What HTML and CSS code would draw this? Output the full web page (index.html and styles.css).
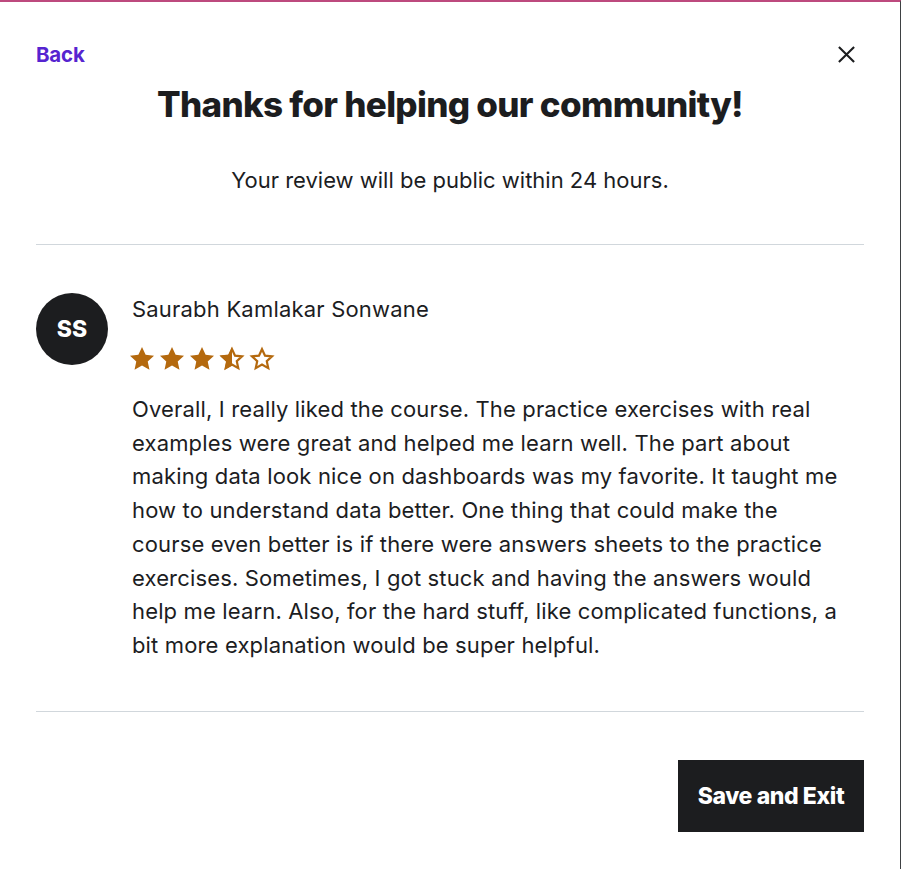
FILE: index.html
```html
<!DOCTYPE html>
<html lang="en">
<head>
<meta charset="utf-8">
<title>Review submitted</title>
<link rel="stylesheet" href="styles.css">
</head>
<body>
<div class="modal">
  <div class="topbar">
    <a class="back" href="#">Back</a>
    <button class="close" aria-label="Close">
      <svg width="20" height="20" viewBox="0 0 20 20"><path d="M2 2 L18 18 M18 2 L2 18" stroke="#1c1d1f" stroke-width="2.2" fill="none"/></svg>
    </button>
  </div>
  <h1 class="title">Thanks for helping our community!</h1>
  <p class="subtitle">Your review will be public within 24 hours.</p>
  <hr class="divider">
  <div class="review">
    <div class="avatar">SS</div>
    <div class="review-body">
      <div class="name">Saurabh Kamlakar Sonwane</div>
      <div class="stars">
        <svg width="28" height="28" viewBox="0 0 24 24"><path d="M12 1.8l3.1 6.6 7.2.8-5.4 4.9 1.5 7.1L12 17.6l-6.4 3.6 1.5-7.1L1.7 9.2l7.2-.8z" fill="#b4690e"/></svg>
        <svg width="28" height="28" viewBox="0 0 24 24"><path d="M12 1.8l3.1 6.6 7.2.8-5.4 4.9 1.5 7.1L12 17.6l-6.4 3.6 1.5-7.1L1.7 9.2l7.2-.8z" fill="#b4690e"/></svg>
        <svg width="28" height="28" viewBox="0 0 24 24"><path d="M12 1.8l3.1 6.6 7.2.8-5.4 4.9 1.5 7.1L12 17.6l-6.4 3.6 1.5-7.1L1.7 9.2l7.2-.8z" fill="#b4690e"/></svg>
        <svg width="28" height="28" viewBox="0 0 24 24"><path d="M12 3.6l2.6 5.5 6 .7-4.5 4.1 1.25 5.9L12 16.8l-5.35 3 1.25-5.9-4.5-4.1 6-.7z" fill="none" stroke="#b4690e" stroke-width="1.9"/><path d="M12 1.8 L12 17.6 L5.6 21.2 L7.1 14.1 L1.7 9.2 L8.9 8.4 Z" fill="#b4690e"/></svg>
        <svg width="28" height="28" viewBox="0 0 24 24"><path d="M12 3.6l2.6 5.5 6 .7-4.5 4.1 1.25 5.9L12 16.8l-5.35 3 1.25-5.9-4.5-4.1 6-.7z" fill="none" stroke="#b4690e" stroke-width="1.9"/></svg>
      </div>
      <p class="text">Overall, I really liked the course. The practice exercises with real examples were great and helped me learn well. The part about making data look nice on dashboards was my favorite. It taught me how to understand data better. One thing that could make the course even better is if there were answers sheets to the practice exercises. Sometimes, I got stuck and having the answers would help me learn. Also, for the hard stuff, like complicated functions, a bit more explanation would be super helpful.</p>
    </div>
  </div>
  <hr class="divider divider-bottom">
  <div class="footer">
    <button class="save">Save and Exit</button>
  </div>
</div>
</body>
</html>
```
FILE: styles.css
```css
* { box-sizing: border-box; }
html, body { margin: 0; padding: 0; background: #fff; }
body { font-family: Inter, "Noto Sans", sans-serif; color: #1c1d1f; }
.modal {
  width: 901px;
  height: 869px;
  border-top: 2px solid #bd4a7e;
  border-right: 1px solid #3e4143;
  padding: 0 36px 0 36px;
  display: flex;
  flex-direction: column;
}
.topbar {
  display: flex;
  justify-content: space-between;
  align-items: center;
  margin-top: 38px;
  height: 28px;
}
.back {
  color: #5624d0;
  font-weight: 700;
  font-size: 20.5px;
  text-decoration: none;
  letter-spacing: -0.2px;
}
.close {
  background: none;
  border: 0;
  padding: 0;
  width: 36px;
  height: 36px;
  display: flex;
  align-items: center;
  justify-content: center;
}
.close svg { width: 19px; height: 19px; }
.title {
  margin: 14px 0 0;
  text-align: center;
  font-size: 35px;
  font-weight: 800;
  letter-spacing: -0.7px;
  line-height: 44px;
}
.subtitle {
  margin: 38px 0 0;
  text-align: center;
  font-size: 22px;
  line-height: 32px;
  color: #1c1d1f;
}
.divider {
  border: 0;
  border-top: 1px solid #d1d7dc;
  margin: 48px 0 0;
  width: 100%;
}
.review {
  display: flex;
  gap: 24px;
  padding-top: 48px;
}
.avatar {
  flex: none;
  width: 72px;
  height: 72px;
  border-radius: 50%;
  background: #1c1d1f;
  color: #fff;
  font-weight: 800;
  font-size: 23px;
  display: flex;
  align-items: center;
  justify-content: center;
}
.review-body { flex: 1; }
.name {
  font-size: 22px;
  line-height: 32px;
  letter-spacing: 0.2px;
}
.stars {
  display: flex;
  gap: 2px;
  margin: 20px 0 0 -4px;
}
.text {
  margin: 20px 0 0;
  padding-right: 14px;
  font-size: 22px;
  line-height: 33.7px;
  letter-spacing: 0.15px;
  color: #1c1d1f;
}
.footer {
  display: flex;
  justify-content: flex-end;
  padding-top: 48px;
}
.save {
  width: 186px;
  height: 72px;
  background: #1c1d1f;
  color: #fff;
  border: 0;
  font-family: inherit;
  font-weight: 800;
  font-size: 23px;
  letter-spacing: -0.4px;
}
```
